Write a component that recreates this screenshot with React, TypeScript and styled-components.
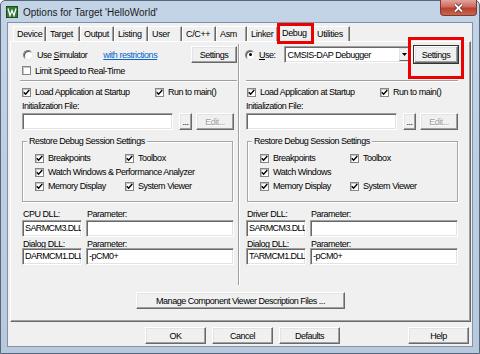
import React from "react";
import styled, { createGlobalStyle } from "styled-components";

const GlobalStyle = createGlobalStyle`
  html, body { margin: 0; padding: 0; background: #fff; }
  body { font-family: "Liberation Sans", Arial, sans-serif; }
`;

const Window = styled.div`
  width: 480px;
  height: 354px;
  box-sizing: border-box;
  display: flex;
  flex-direction: column;
  background: linear-gradient(#c4d4e7, #b8c9dd);
  border: 1px solid #56677d;
  border-radius: 5px 5px 0 0;
  padding: 0 6px 6px 6px;
  font-size: 9px;
  letter-spacing: -0.48px;
  color: #000;
`;

const TitleBar = styled.div`
  height: 21px;
  display: flex;
  align-items: center;
  gap: 5px;
  margin-left: -1px;
`;

const TitleText = styled.span`
  font-size: 10px;
  letter-spacing: 0;
  color: #1a1a1a;
  margin-top: 1px;
`;

const CloseButton = styled.div`
  margin-left: auto;
  margin-right: -4px;
  margin-top: -1px;
  align-self: flex-start;
  width: 37px;
  height: 16px;
  box-sizing: border-box;
  border: 1px solid #7d3a33;
  border-top: none;
  border-radius: 0 0 4px 4px;
  background: linear-gradient(#e2a59c, #cf6a5d 45%, #b8402f 55%, #c9654f);
  display: flex;
  align-items: center;
  justify-content: center;
`;

const Client = styled.div`
  flex: 1;
  display: flex;
  flex-direction: column;
  background: #f0f0f0;
  border: 1px solid #8092a9;
  padding: 0 1px 0 2px;
`;

const TabRow = styled.div`
  height: 18px;
  display: flex;
  align-items: flex-end;
  padding-left: 3px;
`;

const Tab = styled.div<{ $w: number; $active?: boolean }>`
  position: relative;
  width: ${(p) => p.$w}px;
  height: ${(p) => (p.$active ? 18 : 15)}px;
  margin-bottom: ${(p) => (p.$active ? -1 : 0)}px;
  z-index: ${(p) => (p.$active ? 2 : 0)};
  box-sizing: border-box;
  background: #f0f0f0;
  border-top: 1px solid #fff;
  border-left: 1px solid #fff;
  border-right: 1px solid #696969;
  box-shadow: inset -1px 0 #a0a0a0;
  padding: ${(p) => (p.$active ? "2px" : "1px")} 0 0 3px;
  line-height: 12px;
  letter-spacing: -0.35px;
  white-space: nowrap;
`;

const RedMark = styled.div<{ $t: number; $r: number; $b: number; $l: number }>`
  position: absolute;
  top: ${(p) => p.$t}px;
  right: ${(p) => p.$r}px;
  bottom: ${(p) => p.$b}px;
  left: ${(p) => p.$l}px;
  border: 3px solid #ee0000;
  pointer-events: none;
  z-index: 5;
`;

const Panel = styled.div`
  height: 281px;
  box-sizing: border-box;
  border: 1px solid;
  border-color: #fff #696969 #696969 #fff;
  box-shadow: inset -1px -1px #a0a0a0;
  display: flex;
  flex-direction: column;
  align-items: center;
`;

const Columns = styled.div`
  align-self: stretch;
  height: 244px;
  display: flex;
`;

const Column = styled.div<{ $w: number; $ml: number }>`
  width: ${(p) => p.$w}px;
  margin-left: ${(p) => p.$ml}px;
  padding-top: 4px;
  display: flex;
  flex-direction: column;
`;

const Divider = styled.div`
  margin: 2px 0 0 1px;
  height: 241px;
  width: 0;
  border-left: 1px solid #a0a0a0;
  border-right: 1px solid #fff;
`;

const Row = styled.div<{ $h: number; $mt?: number }>`
  height: ${(p) => p.$h}px;
  margin-top: ${(p) => p.$mt ?? 0}px;
  display: flex;
  align-items: center;
  white-space: nowrap;
`;

const Separator = styled.div<{ $ml?: number }>`
  margin-top: 3px;
  margin-left: ${(p) => p.$ml ?? 0}px;
  height: 0;
  border-top: 1px solid #a0a0a0;
  border-bottom: 1px solid #fff;
`;

const Item = styled.label<{ $w?: number; $ml?: number }>`
  display: flex;
  align-items: center;
  gap: 4px;
  width: ${(p) => (p.$w ? `${p.$w}px` : "auto")};
  margin-left: ${(p) => p.$ml ?? 0}px;
  white-space: nowrap;
`;

const Box = styled.span`
  width: 9px;
  height: 9px;
  flex: none;
  box-sizing: border-box;
  background: #fff;
  border: 1px solid #858585;
  box-shadow: inset 1px 1px #c6c6c6;
  display: flex;
  align-items: center;
  justify-content: center;
`;

const RadioDot = styled.span<{ $on?: boolean }>`
  width: 10px;
  height: 10px;
  flex: none;
  box-sizing: border-box;
  border-radius: 50%;
  background: #fff;
  border: 1px solid;
  border-color: #808080 #e8e8e8 #e8e8e8 #808080;
  box-shadow: inset 1px 1px #555;
  display: flex;
  align-items: center;
  justify-content: center;
  &::after {
    content: "";
    display: ${(p) => (p.$on ? "block" : "none")};
    width: 3px;
    height: 3px;
    border-radius: 50%;
    background: #000;
  }
`;

const Link = styled.span<{ $ml: number }>`
  margin-left: ${(p) => p.$ml}px;
  color: #0066cc;
  text-decoration: underline;
`;

const Text = styled.span<{ $ml?: number }>`
  margin-left: ${(p) => p.$ml ?? 0}px;
  white-space: nowrap;
`;

const Button = styled.div<{ $w: number; $h?: number; $ml?: number; $default?: boolean; $disabled?: boolean }>`
  width: ${(p) => p.$w}px;
  height: ${(p) => p.$h ?? 17}px;
  margin-left: ${(p) => (p.$ml === undefined ? "0" : p.$ml < 0 ? "auto" : `${p.$ml}px`)};
  box-sizing: border-box;
  flex: none;
  background: #f0f0f0;
  border: 1px solid;
  border-color: #fff #696969 #696969 #fff;
  box-shadow: inset -1px -1px #a0a0a0, inset 1px 1px #e3e3e3
    ${(p) => (p.$default ? ", 0 0 0 1px #333" : "")};
  display: flex;
  align-items: center;
  justify-content: center;
  color: ${(p) => (p.$disabled ? "#a0a0a0" : "#000")};
  text-shadow: ${(p) => (p.$disabled ? "1px 1px #fff" : "none")};
  white-space: nowrap;
`;

const Field = styled.div<{ $w?: number; $h?: number; $tight?: boolean }>`
  width: ${(p) => (p.$w ? `${p.$w}px` : "auto")};
  flex: ${(p) => (p.$w ? "none" : "1")};
  height: ${(p) => p.$h ?? 17}px;
  box-sizing: border-box;
  background: #fff;
  border: 1px solid;
  border-color: #a0a0a0 #fff #fff #a0a0a0;
  box-shadow: inset 1px 1px #696969, inset -1px -1px #e3e3e3;
  padding: 0 ${(p) => (p.$tight ? "0 0 2px" : "2px")};
  letter-spacing: ${(p) => (p.$tight ? "-0.6px" : "inherit")};
  display: flex;
  align-items: center;
  white-space: nowrap;
  overflow: hidden;
`;

const Combo = styled(Field)`
  padding: 0 1px 0 3px;
  justify-content: space-between;
`;

const ComboArrow = styled.span`
  width: 11px;
  height: 13px;
  box-sizing: border-box;
  background: #f0f0f0;
  border: 1px solid;
  border-color: #e3e3e3 #696969 #696969 #e3e3e3;
  display: flex;
  align-items: center;
  justify-content: center;
`;

const Group = styled.div<{ $ml?: number }>`
  position: relative;
  margin-top: 11px;
  margin-left: ${(p) => p.$ml ?? 0}px;
  width: 211px;
  box-sizing: border-box;
  border: 1px solid #a6a6a6;
  box-shadow: 1px 1px #fff, inset 1px 1px #fff;
  padding: 11px 0 10px 12px;
  display: grid;
  grid-template-columns: 90px auto;
  grid-auto-rows: 10px;
  row-gap: 4px;
`;

const GroupTitle = styled.span`
  position: absolute;
  top: -6px;
  left: 4px;
  padding: 0 2px;
  background: #f0f0f0;
  line-height: 10px;
  white-space: nowrap;
`;

const Wide = styled.div`
  grid-column: 1 / -1;
`;

const DllGrid = styled.div`
  margin-top: 6px;
  width: 212px;
  display: grid;
  grid-template-columns: 60px 1fr;
  column-gap: 4px;
  grid-template-rows: 11px 17px 11px 17px;
  align-items: center;
  & > :nth-child(5),
  & > :nth-child(6) {
    margin-top: 4px;
  }
  & > :nth-child(3),
  & > :nth-child(4),
  & > :nth-child(7),
  & > :nth-child(8) {
    margin-top: 1px;
  }
`;

const DllLabel = styled.span`
  padding-left: 1px;
  white-space: nowrap;
`;

const Footer = styled.div`
  margin-top: 5px;
  height: 17px;
  display: flex;
  gap: 6px;
  padding: 0 2px 0 135px;
`;

const Relative = styled.div<{ $ml?: number }>`
  position: relative;
  margin-left: ${(p) => (p.$ml === undefined ? "0" : p.$ml < 0 ? "auto" : `${p.$ml}px`)};
  display: flex;
`;

const Check = () => (
  <Box>
    <svg width="7" height="7" viewBox="0 0 7 7">
      <path d="M0.8 3.2 L2.6 5.2 L6.3 1" fill="none" stroke="#000" strokeWidth="1.4" />
    </svg>
  </Box>
);

const CheckItem = ({ label, w, ml, off }: { label: React.ReactNode; w?: number; ml?: number; off?: boolean }) => (
  <Item $w={w} $ml={ml}>
    {off ? <Box /> : <Check />}
    <span>{label}</span>
  </Item>
);

const tabs: [string, number][] = [
  ["Device", 33],
  ["Target", 34],
  ["Output", 34],
  ["Listing", 34],
  ["User", 34],
  ["C/C++", 34],
  ["Asm", 31],
  ["Linker", 31],
  ["Debug", 35],
  ["Utilities", 37],
];

const InitFile = () => (
  <>
    <Row $h={12} $mt={2}>
      <Text>Initialization File:</Text>
    </Row>
    <Row $h={17} $mt={1}>
      <Field $w={151} />
      <Button $w={13} $ml={6}>...</Button>
      <Button $w={38} $ml={4} $disabled>Edit...</Button>
    </Row>
  </>
);

const Restore = ({ watch, ml }: { watch: string; ml?: number }) => (
  <Group $ml={ml}>
    <GroupTitle>Restore Debug Session Settings</GroupTitle>
    <CheckItem label="Breakpoints" />
    <CheckItem label="Toolbox" />
    <Wide>
      <CheckItem label={watch} />
    </Wide>
    <CheckItem label="Memory Display" />
    <CheckItem label="System Viewer" />
  </Group>
);

const Dll = ({ first, firstVal, second, secondVal }: { first: string; firstVal: string; second: string; secondVal: string }) => (
  <DllGrid>
    <DllLabel>{first}</DllLabel>
    <DllLabel>Parameter:</DllLabel>
    <Field $tight>{firstVal}</Field>
    <Field />
    <DllLabel>{second}</DllLabel>
    <DllLabel>Parameter:</DllLabel>
    <Field $tight>{secondVal}</Field>
    <Field>-pCM0+</Field>
  </DllGrid>
);

export default function App() {
  return (
    <>
      <GlobalStyle />
      <Window>
        <TitleBar>
          <svg width="12" height="12" viewBox="0 0 12 12">
            <rect x="0.5" y="0.5" width="11" height="11" fill="#2e7f35" stroke="#1a4a1e" />
            <path d="M2 2.5 L4 9.5 L6 4.5 L8 9.5 L10 2.5" fill="none" stroke="#fff" strokeWidth="1.3" />
          </svg>
          <TitleText>Options for Target 'HelloWorld'</TitleText>
          <CloseButton>
            <svg width="11" height="10" viewBox="0 0 11 10">
              <path d="M2 1.5 L9 8.5 M9 1.5 L2 8.5" stroke="#5a2520" strokeWidth="3.2" />
              <path d="M2 1.5 L9 8.5 M9 1.5 L2 8.5" stroke="#fff" strokeWidth="1.8" />
            </svg>
          </CloseButton>
        </TitleBar>
        <Client>
          <TabRow>
            {tabs.map(([name, w]) => (
              <Tab key={name} $w={w} $active={name === "Debug"}>
                {name}
                {name === "Debug" && <RedMark $t={-2} $r={-2} $b={-2} $l={-2} />}
              </Tab>
            ))}
          </TabRow>
          <Panel>
            <Columns>
              <Column $w={215} $ml={11}>
                <Row $h={17}>
                  <Item $ml={1}>
                    <RadioDot />
                    <span>
                      Use <u>S</u>imulator
                    </span>
                  </Item>
                  <Link $ml={16}>with restrictions</Link>
                  <Button $w={46} $ml={-1}>Settings</Button>
                </Row>
                <Row $h={13} $mt={1}>
                  <CheckItem label="Limit Speed to Real-Time" off />
                </Row>
                <Separator $ml={-2} />
                <Row $h={12} $mt={4}>
                  <CheckItem label="Load Application at Startup" w={133} />
                  <CheckItem label="Run to main()" />
                </Row>
                <InitFile />
                <Restore watch="Watch Windows & Performance Analyzer" />
                <Dll first="CPU DLL:" firstVal="SARMCM3.DLL" second="Dialog DLL:" secondVal="DARMCM1.DLL" />
              </Column>
              <Divider />
              <Column $w={212} $ml={6}>
                <Row $h={17}>
                  <Item $ml={-1}>
                    <RadioDot $on />
                    <span>
                      <u>U</u>se:
                    </span>
                  </Item>
                  <Combo $w={128} $h={17} style={{ marginLeft: 8 }}>
                    <span>CMSIS-DAP Debugger</span>
                    <ComboArrow>
                      <svg width="5" height="3" viewBox="0 0 5 3">
                        <path d="M0 0 H5 L2.5 3 Z" fill="#000" />
                      </svg>
                    </ComboArrow>
                  </Combo>
                  <Relative $ml={-1}>
                    <Button $w={44} $default>Settings</Button>
                    <RedMark $t={-9} $r={-6} $b={-16} $l={-6} />
                  </Relative>
                </Row>
                <Row $h={13} $mt={1} />
                <Separator />
                <Row $h={12} $mt={4}>
                  <CheckItem label="Load Application at Startup" w={133} ml={1} />
                  <CheckItem label="Run to main()" />
                </Row>
                <InitFile />
                <Restore watch="Watch Windows" ml={1} />
                <Dll first="Driver DLL:" firstVal="SARMCM3.DLL" second="Dialog DLL:" secondVal="TARMCM1.DLL" />
              </Column>
            </Columns>
            <Button $w={209} $h={17} style={{ marginTop: 6 }}>
              Manage Component Viewer Description Files ...
            </Button>
          </Panel>
          <Footer>
            <Button $w={61}>OK</Button>
            <Button $w={61}>Cancel</Button>
            <Button $w={61}>Defaults</Button>
            <Button $w={61} $ml={-1}>Help</Button>
          </Footer>
        </Client>
      </Window>
    </>
  );
}
